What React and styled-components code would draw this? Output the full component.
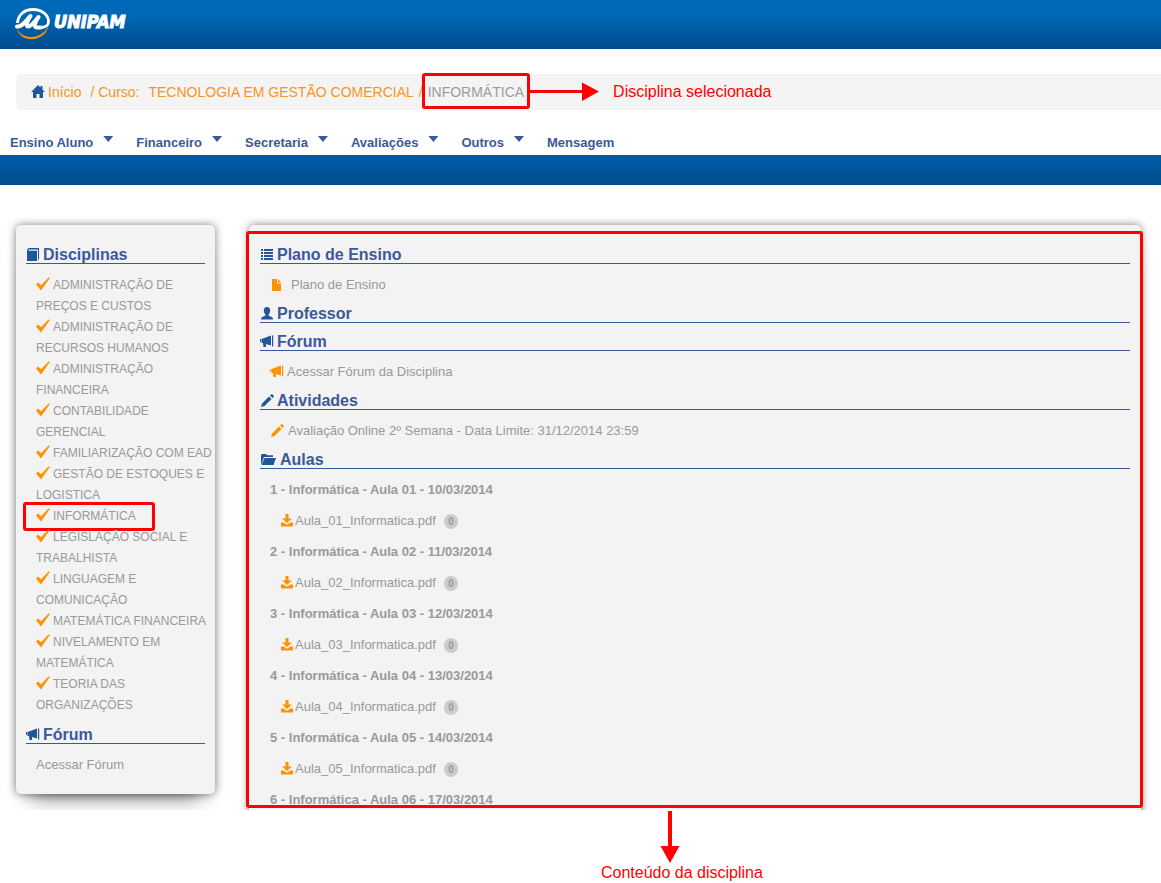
import React from 'react';
import styled, { createGlobalStyle, css } from 'styled-components';

const GlobalStyle = createGlobalStyle`
  *, *::after {
    box-sizing: border-box;
  }

  body {
    margin: 0;
    background: #fff;
    color: #999;
    font-family: "Liberation Sans", Arial, sans-serif;
    font-size: 13px;
    line-height: 20px;
  }

  ul, ol {
    margin: 0;
    padding: 0;
    list-style: none;
  }

  a {
    color: inherit;
    text-decoration: none;
  }
`;

const marker = css`
  content: '';
  position: absolute;
  border: 3px solid #f00;
  border-radius: 3px;
  pointer-events: none;
`;

const Header = styled.header`
  display: flex;
  height: 49px;
  padding: 6px 15px;
  background: linear-gradient(#0069b7 30%, #004a8d);
`;

const Brand = styled.a`
  display: flex;
  align-items: flex-start;
  gap: 3px;
  color: #fff;

  span {
    font-family: "DejaVu Sans Condensed", "DejaVu Sans", sans-serif;
    font-size: 18px;
    font-weight: bold;
    font-style: italic;
    line-height: 32px;
    -webkit-text-stroke: 1px #fff;
  }
`;

const Breadcrumb = styled.nav`
  margin: 25px 0 0 16px;
  padding: 0 15px;
  height: 36px;
  display: flex;
  align-items: center;
  background: #f4f4f4;
  border-radius: 5px 0 0 5px;
  color: #f7941d;
  font-size: 14px;

  ol {
    display: flex;
    align-items: center;
    gap: 9px;
    white-space: nowrap;
  }

  li {
    display: flex;
    gap: 5px;
  }

  a {
    display: flex;
    align-items: center;
    gap: 3px;
  }
`;

const CurrentCrumb = styled.span`
  position: relative;
  color: #999;
  text-shadow: 0 1px 0 #fff;

  &::after {
    ${marker}
    inset: -9px -6px -7px;
  }
`;

const SideNote = styled.span`
  display: flex;
  align-items: center;
  gap: 14px;
  margin-left: 5px;
  color: #f00;
  font-size: 16px;
  white-space: nowrap;
`;

const Menu = styled.nav`
  padding: 23px 10px 2px;
  display: flex;
  gap: 23px;
  color: #3b5998;
  font-weight: bold;
`;

const MenuItem = styled.a`
  display: flex;
  gap: 10px;
  white-space: nowrap;
`;

const Caret = styled.i`
  margin-top: 3px;
  width: 10px;
  height: 6px;
  background: #3b5998;
  clip-path: polygon(0 0, 100% 0, 50% 100%);
`;

const BlueBar = styled.div`
  height: 30px;
  background: linear-gradient(#005ba8, #004d8c);
`;

const Workspace = styled.div`
  display: grid;
  grid-template-columns: 199px 1fr;
  column-gap: 34px;
  padding: 40px 20px 16px 16px;
  overflow: hidden;
`;

const Panel = styled.div`
  padding: 11px 11px 20px;
  background: #f3f3f3;
  border-radius: 5px;
  box-shadow: 0 0 8px rgba(0, 0, 0, 0.5), 0 16px 20px -14px rgba(0, 0, 0, 0.6);
`;

const Sidebar = styled(Panel).attrs({ as: 'aside' })`
  padding: 11px 10px 19px;
`;

/* takes its height from the sidebar, the lesson list runs on below the fold */
const MainColumn = styled.main`
  position: relative;
  contain: size;

  &::after {
    ${marker}
    inset: 6px -2px -14px -3px;
  }
`;

const Heading = styled.h2`
  display: flex;
  align-items: center;
  gap: 3px;
  height: 28px;
  margin: 0;
  padding-top: 10px;
  border-bottom: 1px solid #3b5998;
  color: #3b5998;
  font-size: 16px;
  line-height: 18px;
`;

const Subjects = styled.ul`
  padding: 11px 0 0 10px;
  margin-right: -8px;
  font-size: 12px;
  line-height: 21px;
`;

const Subject = styled.li`
  position: relative;

  svg {
    vertical-align: -2px;
    margin-right: 3px;
  }

  ${({ $marked }) => $marked && css`
    &::after {
      ${marker}
      inset: -4px auto -4px -13px;
      width: 132px;
    }
  `}
`;

const Row = styled.div`
  display: flex;
  align-items: center;
  gap: ${({ $gap }) => $gap || 3}px;
  height: 31px;
  padding: 11px 0 0 ${({ $nested }) => ($nested ? 20 : 10)}px;
  font-weight: ${({ $bold }) => ($bold ? 'bold' : 'normal')};
  white-space: nowrap;

  a {
    display: flex;
    align-items: center;
    gap: inherit;
  }
`;

const Badge = styled.span`
  width: 14px;
  height: 15px;
  margin-left: 7px;
  border-radius: 8px;
  background: #ccc;
  font-size: 10px;
  font-weight: bold;
  line-height: 15px;
  text-align: center;
`;

const BottomNote = styled.div`
  display: flex;
  flex-direction: column;
  width: max-content;
  margin-left: 601px;
  color: #f00;
  font-size: 16px;

  svg {
    margin: 1px 0 0 59px;
  }
`;

const shapes = {
  home: <path d="M7 0 0 7h2v6h3.5V9h3v4H12V7h2l-2.5-2.5V1h-2v1.5z" />,
  book: <path d="M2.5 0H13v11l-1 1.5V1.5H3L2 2.8h9V13H1V2z" />,
  list: (
    <path d="M1 1h2v2H1zM4 1h9v2H4zM1 4h2v2H1zM4 4h9v2H4zM1 7h2v2H1zM4 7h9v2H4zM1 10h2v2H1zM4 10h9v2H4z" />
  ),
  user: <path d="M7 0c2.2 0 3.2 1.4 3.2 3.5S9.3 6.5 8.6 7.5c-.3 1 .4 1.3 1.4 1.7 2 .7 3 1.2 3 3.3H1c0-2.1 1-2.6 3-3.3 1-.4 1.7-.7 1.4-1.7C4.7 6.5 3.8 5.6 3.8 3.5S4.8 0 7 0z" />,
  bullhorn: <path d="M0 4h1v3H0zM1.500 4 11 .5v10L6 9v3H3.500L3 8H1.500zM12 .5h1.200v11H12z" />,
  pencil: <path d="M1 13 2 9.500l7-7L11.500 5l-7 7zM10 1.600l1-1c.5-.5 1-.5 1.500 0l1 1c.5.5.5 1 0 1.500l-1 1z" />,
  folder: <path d="M1 11V2l1-1h4l1 1.200h6V4H4L1.500 11zM4.500 5H16l-2.500 7H1.500z" />,
  file: <path d="M2 1h5v4.500h4V13H2zM8 1l3 3.500H8z" />,
  download: <path d="M5.500 0h3v4.500H12L7 9 2 4.500h3.500zM1 8.500h3L6 10.500h2l2-2h3V12.500H1z" />,
  check: <path d="M0 7.500 2 5.500l3 2.800L12.500.5l1.500.3L5 13.500z" />,
};

const Icon = ({ name, color = '#22569a', width = 14 }) => (
  <svg width={width} height="14" viewBox={`0 0 ${width} 14`} fill={color} aria-hidden="true">
    {shapes[name]}
  </svg>
);

const orange = '#ff9200';

const Logo = () => (
  <svg width="36" height="35" viewBox="0 0 36 35" fill="none" aria-hidden="true">
    <path d="M1.500 21c4 13 24 14 32-1-3 16-29 19-32 1z" fill="#f39200" />
    <path
      d="M2.500 17C3 9 9 3.500 18 3.500S33.500 9 33.500 15.500c0 3.500-3 6-8 6"
      stroke="#fff"
      strokeWidth="2.800"
    />
    <path
      d="M2 20.500c5 1 8.500-5.500 13.500-10.500-3 4-5.500 10.500-2.500 10.500s7-5 10.500-9.500c-3 4-5 9.500-2.500 10.300 1.300.4 3 .2 4.500.2"
      stroke="#fff"
      strokeWidth="4"
      strokeLinecap="round"
      strokeLinejoin="round"
    />
  </svg>
);

const menu = ['Ensino Aluno', 'Financeiro', 'Secretaria', 'Avaliações', 'Outros', 'Mensagem'];

const subjects = [
  'ADMINISTRAÇÃO DE PREÇOS E CUSTOS',
  'ADMINISTRAÇÃO DE RECURSOS HUMANOS',
  'ADMINISTRAÇÃO FINANCEIRA',
  'CONTABILIDADE GERENCIAL',
  'FAMILIARIZAÇÃO COM EAD',
  'GESTÃO DE ESTOQUES E LOGISTICA',
  'INFORMÁTICA',
  'LEGISLAÇÃO SOCIAL E TRABALHISTA',
  'LINGUAGEM E COMUNICAÇÃO',
  'MATEMÁTICA FINANCEIRA',
  'NIVELAMENTO EM MATEMÁTICA',
  'TEORIA DAS ORGANIZAÇÕES',
];

const lessons = [
  { id: '01', date: '10/03/2014', file: 'Aula_01_Informatica.pdf' },
  { id: '02', date: '11/03/2014', file: 'Aula_02_Informatica.pdf' },
  { id: '03', date: '12/03/2014', file: 'Aula_03_Informatica.pdf' },
  { id: '04', date: '13/03/2014', file: 'Aula_04_Informatica.pdf' },
  { id: '05', date: '14/03/2014', file: 'Aula_05_Informatica.pdf' },
  { id: '06', date: '17/03/2014' },
];

const App = () => {
  return (
    <>
      <GlobalStyle />
      <Header>
        <Brand href="#">
          <Logo />
          <span>UNIPAM</span>
        </Brand>
      </Header>

      <Breadcrumb aria-label="Localização">
        <ol>
          <li><a href="#"><Icon name="home" />Início</a></li>
          <li>/ Curso:</li>
          <li>
            <a href="#">TECNOLOGIA EM GESTÃO COMERCIAL</a>
            <span>/</span>
            <CurrentCrumb>INFORMÁTICA</CurrentCrumb>
          </li>
        </ol>
        <SideNote>
          <svg width="70" height="20" viewBox="0 0 70 20" fill="#f00" aria-hidden="true">
            <path d="M0 8h53V.5L70 9.500 53 19v-8H0z" />
          </svg>
          Disciplina selecionada
        </SideNote>
      </Breadcrumb>

      <Menu>
        {menu.map((label) => (
          <MenuItem href="#" key={label}>
            {label}
            {label !== 'Mensagem' && <Caret />}
          </MenuItem>
        ))}
      </Menu>
      <BlueBar />

      <Workspace>
        <Sidebar>
          <Heading><Icon name="book" />Disciplinas</Heading>
          <Subjects>
            {subjects.map((name) => (
              <Subject key={name} $marked={name === 'INFORMÁTICA'}>
                <a href="#"><Icon name="check" color={orange} />{name}</a>
              </Subject>
            ))}
          </Subjects>
          <Heading><Icon name="bullhorn" />Fórum</Heading>
          <Row><a href="#">Acessar Fórum</a></Row>
        </Sidebar>

        <MainColumn>
          <Panel>
            <Heading><Icon name="list" />Plano de Ensino</Heading>
            <Row $gap={7}><a href="#"><Icon name="file" color={orange} />Plano de Ensino</a></Row>
            <Heading><Icon name="user" />Professor</Heading>
            <Heading><Icon name="bullhorn" />Fórum</Heading>
            <Row><a href="#"><Icon name="bullhorn" color={orange} />Acessar Fórum da Disciplina</a></Row>
            <Heading><Icon name="pencil" />Atividades</Heading>
            <Row $gap={4}>
              <a href="#">
                <Icon name="pencil" color={orange} />
                Avaliação Online 2º Semana - Data Limite: 31/12/2014 23:59
              </a>
            </Row>
            <Heading><Icon name="folder" width={17} />Aulas</Heading>
            {lessons.map(({ id, date, file }) => (
              <React.Fragment key={id}>
                <Row $bold>{Number(id)} - Informática - Aula {id} - {date}</Row>
                {file && (
                  <Row $nested $gap={1}>
                    <a href="#"><Icon name="download" color={orange} />{file}</a>
                    <Badge>0</Badge>
                  </Row>
                )}
              </React.Fragment>
            ))}
          </Panel>
        </MainColumn>
      </Workspace>

      <BottomNote>
        <svg width="20" height="52" viewBox="0 0 20 52" fill="#f00" aria-hidden="true">
          <path d="M8 0h4v35h7.500L10 52 .5 35H8z" />
        </svg>
        Conteúdo da disciplina
      </BottomNote>
    </>
  );
};

export default App;
